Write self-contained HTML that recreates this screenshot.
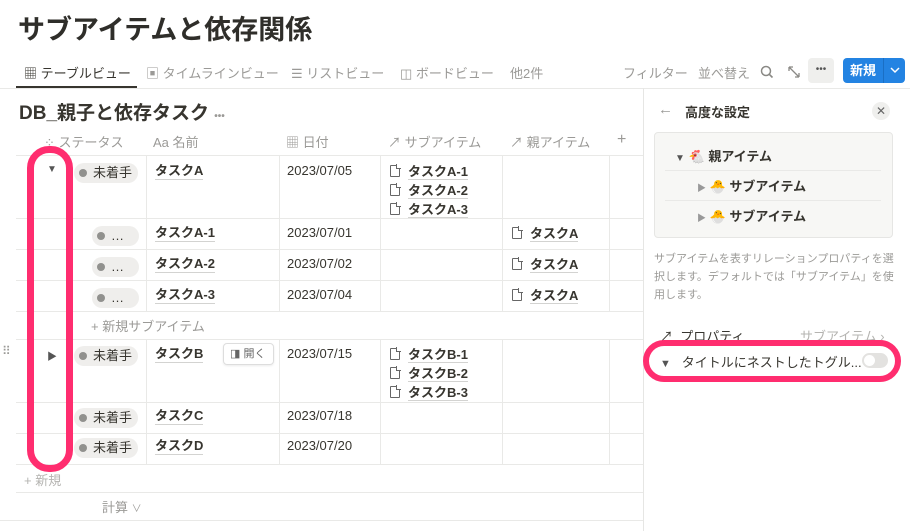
<!DOCTYPE html>
<html><head><meta charset="utf-8"><style>
*{margin:0;padding:0;box-sizing:border-box}
body{width:910px;height:531px;overflow:hidden;background:#fff;font-family:"Liberation Sans","Noto Sans CJK JP",sans-serif;color:#37352f;position:relative}
.a{position:absolute;white-space:nowrap}
.hl{position:absolute;height:1px;background:#e9e9e7}
.vl{position:absolute;width:1px;background:#e9e9e7}
.g{color:#9b9a97}
.t{font-size:13px}
.u{border-bottom:1px solid #d3d3d1;font-weight:bold;font-size:13px;line-height:16px}
.pill{position:absolute;height:20px;border-radius:10px;background:#efeeec;font-size:13px;line-height:20px;padding:0 6px 0 19px}
.pill:before{content:"";position:absolute;left:5px;top:6px;width:8px;height:8px;border-radius:50%;background:#91918e}
.doc{display:inline-block;width:10px;height:12px;border:1.2px solid #666;border-radius:1px;margin-right:8px;vertical-align:-1px;position:relative}
.doc:after{content:"";position:absolute;right:-2px;top:-2px;width:4px;height:4px;background:#fff;border-left:1.1px solid #666;border-bottom:1.1px solid #666}
</style></head><body>
<div class="a" style="left:18px;top:8px;font-size:27px;font-weight:bold;color:#2f2e2a">サブアイテムと依存関係</div>

<div class="a t" style="left:24px;top:63px;color:#37352f">▦ テーブルビュー</div>
<div class="a" style="left:16px;top:86px;width:121px;height:2px;background:#37352f"></div>
<div class="a t g" style="left:146px;top:63px">▣ タイムラインビュー</div>
<div class="a t g" style="left:291px;top:63px">☰ リストビュー</div>
<div class="a t g" style="left:400px;top:63px">◫ ボードビュー</div>
<div class="a t g" style="left:510px;top:63px">他2件</div>
<div class="a t g" style="left:623px;top:63px">フィルター</div>
<div class="a t g" style="left:698px;top:63px">並べ替え</div>
<svg class="a" style="left:760px;top:65px" width="14" height="14" viewBox="0 0 14 14"><circle cx="6" cy="6" r="4.5" fill="none" stroke="#8a8985" stroke-width="1.5"/><path d="M9.3 9.3L12.5 12.5" stroke="#8a8985" stroke-width="1.6"/></svg>
<svg class="a" style="left:788px;top:66px" width="12" height="12" viewBox="0 0 12 12"><path d="M1 1L11 11M1 1v4M1 1h4M11 11v-4M11 11h-4" stroke="#8a8985" stroke-width="1.3" fill="none"/></svg>
<div class="a" style="left:808px;top:58px;width:26px;height:25px;background:#efefed;border-radius:4px;text-align:center;font-size:10px;line-height:24px;color:#555">•••</div>
<div class="a" style="left:843px;top:58px;width:62px;height:25px;background:#2383e2;border-radius:4px;color:#fff;font-size:13px;font-weight:bold;line-height:25px;padding-left:7px">新規<span style="position:absolute;left:40px;top:0;width:1px;height:25px;background:#1a6fc4"></span><svg style="position:absolute;left:47px;top:9px" width="10" height="7" viewBox="0 0 10 7"><path d="M1 1l4 4 4-4" stroke="#fff" stroke-width="1.5" fill="none"/></svg></div>
<div class="hl" style="left:0;top:88px;width:910px"></div>

<div class="a" style="left:19px;top:98px;font-size:19px;font-weight:bold">DB_親子と依存タスク <span class="g" style="font-size:10px">•••</span></div>

<div class="a t g" style="left:44px;top:132px">⁘ ステータス</div>
<div class="a t g" style="left:153px;top:132px">Aa 名前</div>
<div class="a t g" style="left:286px;top:132px">▦ 日付</div>
<div class="a t g" style="left:388px;top:132px">↗ サブアイテム</div>
<div class="a t g" style="left:510px;top:132px">↗ 親アイテム</div>
<div class="a g" style="left:617px;top:131px;font-size:16px">+</div>

<div class="hl" style="left:16px;top:155px;width:627px"></div>
<div class="hl" style="left:16px;top:218px;width:627px"></div>
<div class="hl" style="left:16px;top:249px;width:627px"></div>
<div class="hl" style="left:16px;top:280px;width:627px"></div>
<div class="hl" style="left:16px;top:311px;width:627px"></div>
<div class="hl" style="left:16px;top:339px;width:627px"></div>
<div class="hl" style="left:16px;top:402px;width:627px"></div>
<div class="hl" style="left:16px;top:433px;width:627px"></div>
<div class="hl" style="left:16px;top:464px;width:627px"></div>
<div class="hl" style="left:16px;top:492px;width:627px"></div>
<div class="hl" style="left:0;top:520px;width:643px"></div>
<div class="vl" style="left:146px;top:155px;height:156px"></div>
<div class="vl" style="left:279px;top:155px;height:156px"></div>
<div class="vl" style="left:380px;top:155px;height:156px"></div>
<div class="vl" style="left:502px;top:155px;height:156px"></div>
<div class="vl" style="left:609px;top:155px;height:156px"></div>
<div class="vl" style="left:146px;top:339px;height:125px"></div>
<div class="vl" style="left:279px;top:339px;height:125px"></div>
<div class="vl" style="left:380px;top:339px;height:125px"></div>
<div class="vl" style="left:502px;top:339px;height:125px"></div>
<div class="vl" style="left:609px;top:339px;height:125px"></div>

<div class="a" style="left:47px;top:164px;font-size:10px;color:#555">▼</div>
<div class="pill" style="left:74px;top:163px">未着手</div>
<div class="a u" style="left:155px;top:163px">タスクA</div>
<div class="a t" style="left:287px;top:163px">2023/07/05</div>
<div class="a" style="left:390px;top:163px"><span class="doc"></span><span class="u">タスクA-1</span></div>
<div class="a" style="left:390px;top:182px"><span class="doc"></span><span class="u">タスクA-2</span></div>
<div class="a" style="left:390px;top:201px"><span class="doc"></span><span class="u">タスクA-3</span></div>

<div class="pill" style="left:92px;top:226px;width:47px">…</div>
<div class="a u" style="left:155px;top:225px">タスクA-1</div>
<div class="a t" style="left:287px;top:225px">2023/07/01</div>
<div class="a" style="left:512px;top:225px"><span class="doc"></span><span class="u">タスクA</span></div>

<div class="pill" style="left:92px;top:257px;width:47px">…</div>
<div class="a u" style="left:155px;top:256px">タスクA-2</div>
<div class="a t" style="left:287px;top:256px">2023/07/02</div>
<div class="a" style="left:512px;top:256px"><span class="doc"></span><span class="u">タスクA</span></div>

<div class="pill" style="left:92px;top:288px;width:47px">…</div>
<div class="a u" style="left:155px;top:287px">タスクA-3</div>
<div class="a t" style="left:287px;top:287px">2023/07/04</div>
<div class="a" style="left:512px;top:287px"><span class="doc"></span><span class="u">タスクA</span></div>

<div class="a t g" style="left:91px;top:316px">+ 新規サブアイテム</div>

<div class="a g" style="left:2px;top:344px;font-size:12px;letter-spacing:-2px">⠿</div>
<div class="a" style="left:47px;top:348px;font-size:10px;color:#555">▶</div>
<div class="pill" style="left:74px;top:346px">未着手</div>
<div class="a u" style="left:155px;top:346px">タスクB</div>
<div class="a" style="left:223px;top:343px;width:51px;height:22px;border:1px solid #ddd;border-radius:4px;box-shadow:0 1px 2px rgba(0,0,0,.08);font-size:11px;color:#666;line-height:20px;padding-left:6px">◨ 開く</div>
<div class="a t" style="left:287px;top:346px">2023/07/15</div>
<div class="a" style="left:390px;top:346px"><span class="doc"></span><span class="u">タスクB-1</span></div>
<div class="a" style="left:390px;top:365px"><span class="doc"></span><span class="u">タスクB-2</span></div>
<div class="a" style="left:390px;top:384px"><span class="doc"></span><span class="u">タスクB-3</span></div>

<div class="pill" style="left:74px;top:408px">未着手</div>
<div class="a u" style="left:155px;top:408px">タスクC</div>
<div class="a t" style="left:287px;top:408px">2023/07/18</div>
<div class="pill" style="left:74px;top:438px">未着手</div>
<div class="a u" style="left:155px;top:438px">タスクD</div>
<div class="a t" style="left:287px;top:438px">2023/07/20</div>

<div class="a t g" style="left:24px;top:470px;color:#b5b4b1">+ 新規</div>
<div class="a t g" style="left:102px;top:497px">計算 <span style="font-size:10px">∨</span></div>

<div class="a" style="left:27px;top:146px;width:46px;height:326px;border:7px solid #ff2d6f;border-radius:22px"></div>

<div class="vl" style="left:643px;top:88px;height:443px;background:#e6e6e4"></div>
<div class="a g" style="left:658px;top:101px;font-size:15px">←</div>
<div class="a t" style="left:685px;top:102px;font-weight:bold">高度な設定</div>
<div class="a" style="left:872px;top:102px;width:18px;height:18px;border-radius:50%;background:#efefed;text-align:center;font-size:12px;line-height:18px;color:#666">✕</div>
<div class="a" style="left:654px;top:132px;width:239px;height:106px;background:#f7f7f5;border:1px solid #e6e6e4;border-radius:4px"></div>
<div class="a t" style="left:675px;top:146px;font-weight:bold"><span style="font-size:10px;color:#555">▼</span> 🐔 親アイテム</div>
<div class="hl" style="left:665px;top:170px;width:216px"></div>
<div class="a t" style="left:697px;top:176px;font-weight:bold"><span style="font-size:9px;color:#999">▶</span> 🐣 サブアイテム</div>
<div class="hl" style="left:665px;top:200px;width:216px"></div>
<div class="a t" style="left:697px;top:206px;font-weight:bold"><span style="font-size:9px;color:#999">▶</span> 🐣 サブアイテム</div>
<div class="a g" style="left:654px;top:250px;font-size:11px;line-height:18px;white-space:normal;width:240px">サブアイテムを表すリレーションプロパティを選択します。デフォルトでは「サブアイテム」を使用します。</div>
<div class="a t" style="left:660px;top:326px">↗ &nbsp;プロパティ</div>
<div class="a t g" style="left:800px;top:326px;color:#b5b4b1">サブアイテム ›</div>
<div class="a t" style="left:660px;top:352px"><span style="font-size:11px;color:#555">▼</span> &nbsp; タイトルにネストしたトグル...</div>
<div class="a" style="left:862px;top:353px;width:26px;height:15px;border-radius:8px;background:#e3e2e0"><span style="position:absolute;left:2px;top:2px;width:11px;height:11px;border-radius:50%;background:#fff"></span></div>
<div class="a" style="left:643px;top:340px;width:258px;height:42px;border:6px solid #ff2d6f;border-radius:21px"></div>
</body></html>
